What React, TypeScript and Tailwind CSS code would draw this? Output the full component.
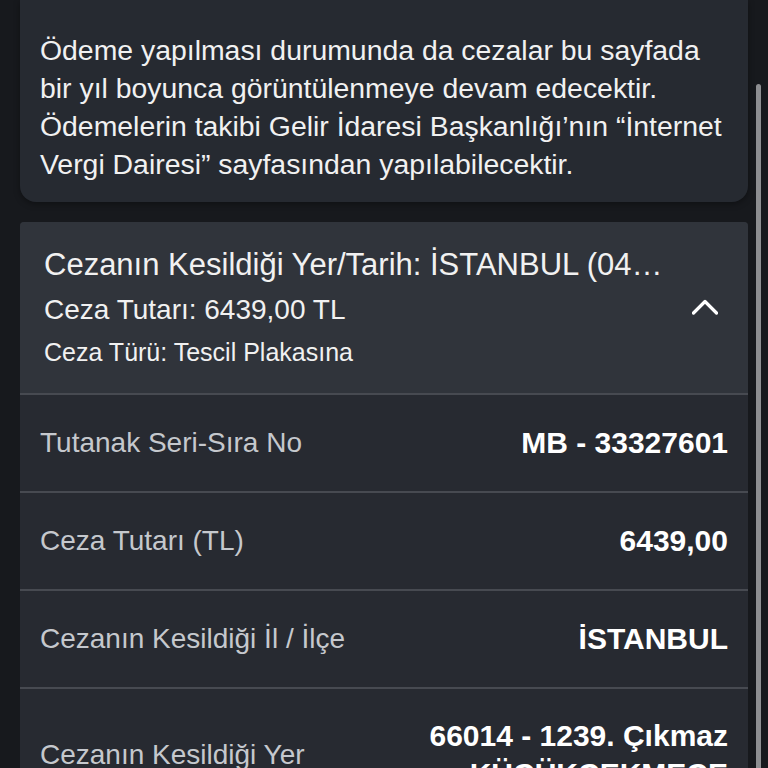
const rows = [
    { label: "Tutanak Seri-Sıra No", value: ["MB - 33327601"] },
    { label: "Ceza Tutarı (TL)", value: ["6439,00"] },
    { label: "Cezanın Kesildiği İl / İlçe", value: ["İSTANBUL"] },
    { label: "Cezanın Kesildiği Yer", value: ["66014 - 1239. Çıkmaz", "KÜÇÜKÇEKMECE"] },
];

function ChevronUp() {
    return (
        <svg width="26" height="16" viewBox="0 0 26 16" fill="none">
            <polyline
                points="1.5,14 13,2.5 24.5,14"
                stroke="#ffffff"
                strokeWidth="3.2"
                strokeLinecap="round"
                strokeLinejoin="round"
            />
        </svg>
    );
}

export default function App() {
    return (
        <div
            className="relative h-[768px] w-[768px] overflow-hidden bg-[#17191d] text-[#f1f1f1]"
            style={{ fontFamily: '"Liberation Sans", Arial, sans-serif' }}
        >
            <div className="flex flex-col gap-[20px] px-[20px]">
                {/* Info note */}
                <div className="rounded-b-[16px] bg-[#262a31] px-[20px] pb-[19px] pt-[31px] shadow-[0_2px_6px_rgba(0,0,0,0.35)]">
                    <p className="text-[28.4px] leading-[38px]">
                        Ödeme yapılması durumunda da cezalar bu sayfada bir yıl boyunca görüntülenmeye devam edecektir.
                        Ödemelerin takibi Gelir İdaresi Başkanlığı’nın “İnternet Vergi Dairesi” sayfasından
                        yapılabilecektir.
                    </p>
                </div>

                {/* Penalty accordion */}
                <div className="overflow-hidden rounded-t-[4px] bg-[#272a31]">
                    <div className="flex items-center border-b-2 border-[#474a51] bg-[#30343b] pb-[25px] pl-[24px] pt-[23px]">
                        <div className="flex w-[625px] min-w-0 flex-col">
                            <div className="truncate text-[31px] leading-[40px]">
                                Cezanın Kesildiği Yer/Tarih: İSTANBUL (04.05.2023)
                            </div>
                            <div className="mt-[7px] text-[28px] leading-[36px]">Ceza Tutarı: 6439,00 TL</div>
                            <div className="mt-[8px] text-[25px] leading-[32px]">Ceza Türü: Tescil Plakasına</div>
                        </div>
                        <div className="ml-[23px] flex items-center">
                            <ChevronUp />
                        </div>
                    </div>

                    {rows.map((row, i) => (
                        <div
                            key={i}
                            className={
                                i < rows.length - 1
                                    ? "flex min-h-[98px] items-center justify-between border-b-2 border-[#474a51] px-[20px]"
                                    : "flex items-center justify-between px-[20px] py-[28px]"
                            }
                        >
                            <span className="text-[28px] leading-[38px] text-[#c5c8cd]">{row.label}</span>
                            <div className="flex flex-col items-end text-right">
                                {row.value.map((v, j) => (
                                    <span key={j} className="text-[30px] font-bold leading-[38px] text-white">
                                        {v}
                                    </span>
                                ))}
                            </div>
                        </div>
                    ))}
                </div>
            </div>

            {/* scrollbar thumb */}
            <div className="absolute left-[756px] top-[84px] h-[720px] w-[5px] rounded-full bg-[#8d8e91]" />
        </div>
    );
}
